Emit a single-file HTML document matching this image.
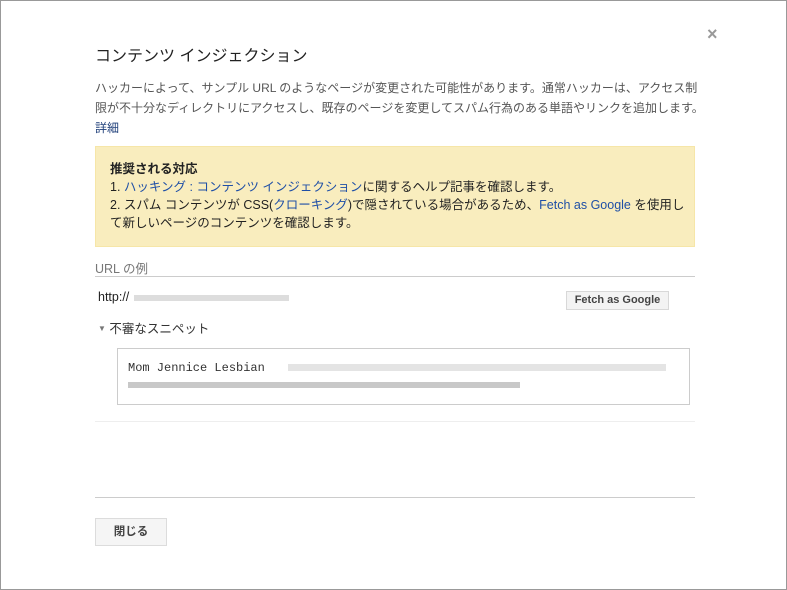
<!DOCTYPE html>
<html><head><meta charset="utf-8"><style>
*{margin:0;padding:0;box-sizing:border-box}
body{width:787px;height:590px;background:#fff;font-family:"Liberation Sans","Noto Sans CJK JP",sans-serif;color:#222;position:relative;overflow:hidden}
.frame{position:absolute;left:0;top:0;width:787px;height:590px;border:1px solid #999}
.a{position:absolute;white-space:nowrap}
a{color:#1f4fa6;text-decoration:none}
</style></head><body>
<div class="frame"></div>
<div class="a" style="left:707px;top:24px;font-size:18px;color:#999;font-weight:bold">×</div>
<div class="a" style="left:95px;top:42px;font-size:16px;color:#222">コンテンツ インジェクション</div>
<div class="a" style="left:95px;top:78px;font-size:12px;line-height:20px;color:#555">ハッカーによって、サンプル URL のようなページが変更された可能性があります。通常ハッカーは、アクセス制<br>限が不十分なディレクトリにアクセスし、既存のページを変更してスパム行為のある単語やリンクを追加します。<br><a style="color:#1f3f7a">詳細</a></div>
<div class="a" style="left:95px;top:146px;width:600px;height:101px;background:#f9edbe;border:1px solid #f6e6a8"></div>
<div class="a" style="left:110px;top:160px;font-size:12.5px;line-height:18px;color:#222"><b>推奨される対応</b><br>1. <a>ハッキング : コンテンツ インジェクション</a>に関するヘルプ記事を確認します。<br>2. スパム コンテンツが CSS(<a>クローキング</a>)で隠されている場合があるため、<a>Fetch as Google</a> を使用し<br>て新しいページのコンテンツを確認します。</div>
<div class="a" style="left:95px;top:258px;font-size:12.5px;color:#777">URL の例</div>
<div class="a" style="left:95px;top:276px;width:600px;height:1px;background:#ccc"></div>
<div class="a" style="left:98px;top:290px;font-size:12.5px;color:#222">http://</div>
<div class="a" style="left:134px;top:295px;width:155px;height:6px;background:#ddd"></div>
<div class="a" style="left:566px;top:291px;width:103px;height:19px;border:1px solid #d8d8d8;background:#f3f3f3;font-size:11px;font-weight:bold;color:#444;text-align:center;line-height:17px">Fetch as Google</div>
<div class="a" style="left:98px;top:318px;font-size:12.5px;color:#333"><span style="font-size:8px;color:#777;vertical-align:2px">▼</span> 不審なスニペット</div>
<div class="a" style="left:117px;top:348px;width:573px;height:57px;border:1px solid #ccc"></div>
<div class="a" style="left:128px;top:361px;font-family:'Liberation Mono',monospace;font-size:12px;color:#333">Mom Jennice Lesbian</div>
<div class="a" style="left:288px;top:364px;width:378px;height:7px;background:#e4e4e4"></div>
<div class="a" style="left:128px;top:382px;width:392px;height:6px;background:#c8c8c8"></div>
<div class="a" style="left:95px;top:421px;width:600px;height:1px;background:#eee"></div>
<div class="a" style="left:95px;top:497px;width:600px;height:1px;background:#ccc"></div>
<div class="a" style="left:95px;top:518px;width:72px;height:28px;border:1px solid #dcdcdc;background:#f5f5f5;font-size:11.5px;font-weight:bold;color:#444;text-align:center;line-height:26px">閉じる</div>
</body></html>
